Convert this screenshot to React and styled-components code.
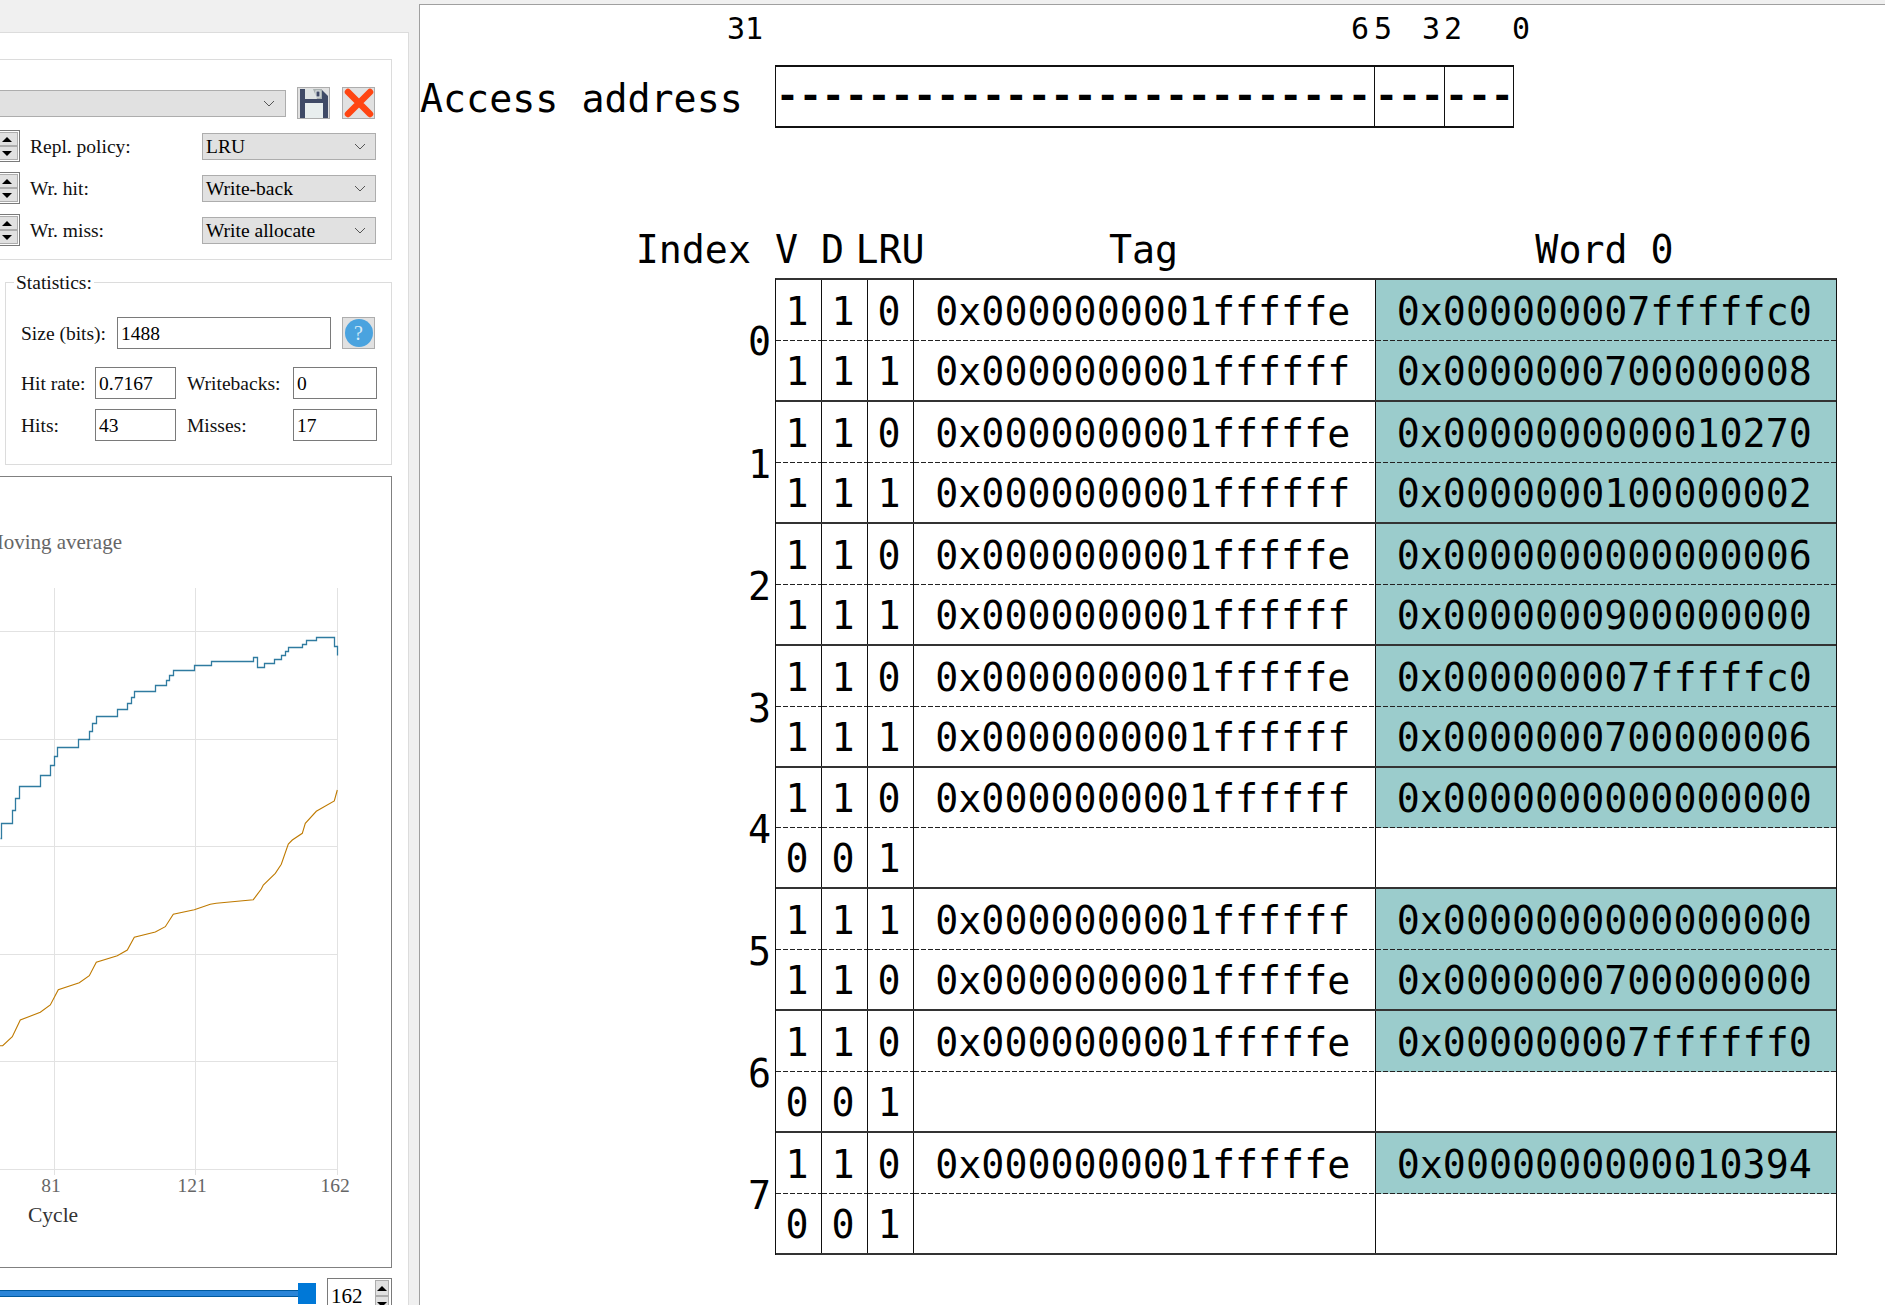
import React from "react";
import styled, { createGlobalStyle } from "styled-components";

const GlobalStyle = createGlobalStyle`
  html, body {
    margin: 0;
    padding: 0;
    background: #f0f0f0;
  }
`;

const SETS = [
  [
    ["1", "1", "0", "0x0000000001fffffe", "0x000000007fffffc0"],
    ["1", "1", "1", "0x0000000001ffffff", "0x0000000700000008"],
  ],
  [
    ["1", "1", "0", "0x0000000001fffffe", "0x0000000000010270"],
    ["1", "1", "1", "0x0000000001ffffff", "0x0000000100000002"],
  ],
  [
    ["1", "1", "0", "0x0000000001fffffe", "0x0000000000000006"],
    ["1", "1", "1", "0x0000000001ffffff", "0x0000000900000000"],
  ],
  [
    ["1", "1", "0", "0x0000000001fffffe", "0x000000007fffffc0"],
    ["1", "1", "1", "0x0000000001ffffff", "0x0000000700000006"],
  ],
  [
    ["1", "1", "0", "0x0000000001ffffff", "0x0000000000000000"],
    ["0", "0", "1", "", ""],
  ],
  [
    ["1", "1", "1", "0x0000000001ffffff", "0x0000000000000000"],
    ["1", "1", "0", "0x0000000001fffffe", "0x0000000700000000"],
  ],
  [
    ["1", "1", "0", "0x0000000001fffffe", "0x000000007ffffff0"],
    ["0", "0", "1", "", ""],
  ],
  [
    ["1", "1", "0", "0x0000000001fffffe", "0x0000000000010394"],
    ["0", "0", "1", "", ""],
  ],
];

const BITS = [
  { text: "31", gap: 307 },
  { text: "6", gap: 588 },
  { text: "5", gap: -7 },
  { text: "3", gap: 18 },
  { text: "2", gap: -8 },
  { text: "0", gap: 38 },
];

// traced from the reference, x then y in chart pixels * 3
const HIT_STEPS = [
  [0, 1105], [4, 1105], [4, 1060], [37, 1060], [37, 1021], [46, 1021], [46, 985], [58, 985],
  [58, 949], [121, 949], [121, 916], [151, 916], [151, 886], [163, 886], [163, 859], [172, 859],
  [172, 832], [235, 832], [235, 808], [268, 808], [268, 784], [277, 784], [277, 760], [289, 760],
  [289, 739], [352, 739], [352, 718], [382, 718], [382, 700], [394, 700], [394, 682], [403, 682],
  [403, 664], [466, 664], [466, 646], [499, 646], [499, 631], [508, 631], [508, 616], [520, 616],
  [520, 601], [583, 601], [583, 586], [634, 586], [634, 574], [760, 574], [760, 562], [772, 562],
  [772, 592], [793, 592], [793, 580], [823, 580], [823, 568], [844, 568], [844, 556], [856, 556],
  [856, 544], [865, 544], [865, 532], [907, 532], [907, 523], [919, 523], [919, 511], [949, 511],
  [949, 502], [1003, 502], [1003, 529], [1012, 529], [1012, 556],
];

const AVG_LOW = [
  [0, 482], [8, 482], [37, 455], [61, 405], [121, 382], [151, 360], [175, 314], [238, 293],
  [268, 272], [289, 232], [352, 212], [382, 195], [403, 157], [466, 141], [496, 125], [520, 88],
  [583, 74], [631, 58], [649, 55], [760, 44], [784, 12], [790, 0],
];

const AVG_HIGH = [
  [826, 1210], [844, 1183], [865, 1122], [877, 1110], [907, 1090], [916, 1060], [949, 1024],
  [1003, 993], [1012, 960],
];

const upperPoint = ([x, y]) => `${(x / 3).toFixed(1)},${(y / 3 - 7).toFixed(1)}`;
const lowerPoint = ([x, y]) => `${(x / 3).toFixed(1)},${(y / 3 + 408).toFixed(1)}`;
const stepPoint = ([x, y]) => `${Math.round(x / 3) + 0.5},${Math.round(y / 3 - 7) + 0.5}`;

const GRID_Y = [154, 262, 369, 477, 584, 692];
const GRID_X = [54, 195, 337];

function Chevron() {
  return (
    <svg width="12" height="7" viewBox="0 0 12 7">
      <polyline points="1,1 6,6 11,1" fill="none" stroke="#555" strokeWidth="1" />
    </svg>
  );
}

function Select({ children }) {
  return (
    <Combo>
      <ComboText>{children}</ComboText>
      <Chevron />
    </Combo>
  );
}

function SaveIcon() {
  return (
    <svg width="28" height="29" viewBox="0 0 28 29">
      <path d="M0 0H21L28 7V29H0Z" fill="#3f4a66" />
      <path d="M5 0H22V10H5Z" fill="#a9b1b1" />
      <path d="M5 0H13L17 10H5Z" fill="#dfe4e4" />
      <rect x="16" y="2" width="4" height="6" fill="#3f4a66" stroke="#e8eeee" strokeWidth="1" />
      <rect x="5" y="14" width="18" height="15" fill="#e8eeee" />
    </svg>
  );
}

function CloseIcon() {
  return (
    <svg width="30" height="30" viewBox="0 0 30 30">
      <path d="M4 4L26 26M26 4L4 26" stroke="#ff4512" strokeWidth="6.5" strokeLinecap="round" />
    </svg>
  );
}

function Spinner() {
  return (
    <SpinBox>
      <SpinColumn>
        <SpinButton>
          <Arrow $up />
        </SpinButton>
        <SpinButton>
          <Arrow />
        </SpinButton>
      </SpinColumn>
    </SpinBox>
  );
}

function Chart() {
  return (
    <ChartSvg viewBox="0 0 390 789">
      {GRID_Y.map((y) => (
        <line key={y} x1="0" x2="338" y1={y + 0.5} y2={y + 0.5} stroke="#e2e2e2" />
      ))}
      {GRID_X.map((x) => (
        <line key={x} x1={x + 0.5} x2={x + 0.5} y1="111" y2="698" stroke="#e2e2e2" />
      ))}
      <polyline points={HIT_STEPS.map(stepPoint).join(" ")} fill="none" stroke="#2f7ba0" strokeWidth="1.3" />
      <polyline
        points={[...AVG_LOW.map(lowerPoint), ...AVG_HIGH.map(upperPoint)].join(" ")}
        fill="none"
        stroke="#bf7a00"
        strokeWidth="1.1"
      />
      <LegendText x="122" y="72" textAnchor="end">
        Moving average
      </LegendText>
      <ChartText x="51" y="715" textAnchor="middle">
        81
      </ChartText>
      <ChartText x="192" y="715" textAnchor="middle">
        121
      </ChartText>
      <ChartText x="335" y="715" textAnchor="middle">
        162
      </ChartText>
      <AxisTitle x="28" y="745">
        Cycle
      </AxisTitle>
    </ChartSvg>
  );
}

export default function App() {
  return (
    <>
      <GlobalStyle />
      <Page>
        <LeftPane>
          <Panel>
            <ConfigGroup>
              <ToolRow>
                <PresetCombo>
                  <Chevron />
                </PresetCombo>
                <IconButton>
                  <SaveIcon />
                </IconButton>
                <IconButton>
                  <CloseIcon />
                </IconButton>
              </ToolRow>
              <ConfigRow>
                <Spinner />
                <ConfigLabel>Repl. policy:</ConfigLabel>
                <Select>LRU</Select>
              </ConfigRow>
              <ConfigRow>
                <Spinner />
                <ConfigLabel>Wr. hit:</ConfigLabel>
                <Select>Write-back</Select>
              </ConfigRow>
              <ConfigRow>
                <Spinner />
                <ConfigLabel>Wr. miss:</ConfigLabel>
                <Select>Write allocate</Select>
              </ConfigRow>
            </ConfigGroup>

            <StatsGroup>
              <StatsTitle>Statistics:</StatsTitle>
              <SizeRow>
                <StatLabel $width={96}>Size (bits):</StatLabel>
                <Field $width={214}>1488</Field>
                <IconButton>
                  <HelpCircle>?</HelpCircle>
                </IconButton>
              </SizeRow>
              <StatRow>
                <StatLabel $width={74}>Hit rate:</StatLabel>
                <Field $width={81}>0.7167</Field>
                <StatLabel $width={106}>Writebacks:</StatLabel>
                <Field $width={84}>0</Field>
              </StatRow>
              <StatRow>
                <StatLabel $width={74}>Hits:</StatLabel>
                <Field $width={81}>43</Field>
                <StatLabel $width={106}>Misses:</StatLabel>
                <Field $width={84}>17</Field>
              </StatRow>
            </StatsGroup>

            <ChartBox>
              <Chart />
            </ChartBox>

            <SliderRow>
              <Slider>
                <Track />
                <Handle />
              </Slider>
              <CycleBox>
                <CycleValue>162</CycleValue>
                <CycleButtons>
                  <SpinButton>
                    <Arrow $up />
                  </SpinButton>
                  <SpinButton>
                    <Arrow />
                  </SpinButton>
                </CycleButtons>
              </CycleBox>
            </SliderRow>
          </Panel>
        </LeftPane>

        <RightPane>
          <BitRow>
            {BITS.map((bit) => (
              <Bit key={bit.text} $gap={bit.gap}>
                {bit.text}
              </Bit>
            ))}
          </BitRow>

          <AddressRow>
            <AddressLabel>Access address</AddressLabel>
            <AddressBox>
              <AddressField $width={599}>{"-".repeat(26)}</AddressField>
              <AddressField $width={70}>---</AddressField>
              <AddressField $width={68} $last>
                ---
              </AddressField>
            </AddressBox>
          </AddressRow>

          <HeaderRow>
            <IndexHeader>Index</IndexHeader>
            <BitHeader $width={46}>V</BitHeader>
            <BitHeader $width={46}>D</BitHeader>
            <LruHeader>LRU</LruHeader>
            <WideHeader>Tag</WideHeader>
            <WideHeader>Word 0</WideHeader>
          </HeaderRow>

          <CacheTable>
            {SETS.map((ways, index) => (
              <SetRow key={index}>
                <SetIndex>{index}</SetIndex>
                <SetBody $first={index === 0}>
                  {ways.map((way, wayIndex) => (
                    <WayRow key={wayIndex} $last={wayIndex === 1}>
                      <Cell $dashed={wayIndex === 0}>{way[0]}</Cell>
                      <Cell $dashed={wayIndex === 0}>{way[1]}</Cell>
                      <Cell $dashed={wayIndex === 0}>{way[2]}</Cell>
                      <Cell $dashed={wayIndex === 0}>{way[3]}</Cell>
                      <Cell $dashed={wayIndex === 0} $filled={way[4] !== ""} $end>
                        {way[4]}
                      </Cell>
                    </WayRow>
                  ))}
                </SetBody>
              </SetRow>
            ))}
          </CacheTable>
        </RightPane>
      </Page>
    </>
  );
}

const Page = styled.div`
  display: flex;
  width: 1885px;
  height: 1305px;
  overflow: hidden;
  background: #f0f0f0;
`;

const LeftPane = styled.div`
  flex: none;
  width: 419px;
  height: 1305px;
  padding-top: 32px;
  box-sizing: border-box;
  display: flex;
  justify-content: flex-end;
  padding-right: 10px;
  overflow: hidden;
  font-family: "Liberation Serif", serif;
  font-size: 19.5px;
  color: #000;
`;

const Panel = styled.div`
  flex: none;
  width: 420px;
  height: 1273px;
  box-sizing: border-box;
  background: #fff;
  border-top: 1px solid #dcdcdc;
  border-right: 1px solid #dcdcdc;
  padding: 26px 16px 0 0;
  display: flex;
  flex-direction: column;
  align-items: flex-end;
`;

const ConfigGroup = styled.div`
  flex: none;
  width: 400px;
  height: 201px;
  box-sizing: border-box;
  border: 1px solid #dcdcdc;
  padding: 27px 15px 0 0;
  display: flex;
  flex-direction: column;
  gap: 10px;
`;

const ToolRow = styled.div`
  display: flex;
  justify-content: flex-end;
  align-items: center;
  height: 32px;
  margin-bottom: 1px;
  gap: 12px;
  padding-right: 1px;
`;

const PresetCombo = styled.div`
  flex: none;
  width: 300px;
  height: 27px;
  box-sizing: border-box;
  margin-right: -1px;
  background: #e1e1e1;
  border: 1px solid #adadad;
  display: flex;
  justify-content: flex-end;
  align-items: center;
  padding-right: 10px;
`;

const IconButton = styled.div`
  flex: none;
  width: 33px;
  height: 32px;
  box-sizing: border-box;
  background: #e1e1e1;
  border: 1px solid #adadad;
  display: flex;
  align-items: center;
  justify-content: center;
`;

const ConfigRow = styled.div`
  display: flex;
  justify-content: flex-end;
  align-items: center;
  height: 32px;
`;

const ConfigLabel = styled.div`
  flex: none;
  width: 172px;
  padding-top: 2px;
  color: #111;
`;

const Combo = styled.div`
  flex: none;
  width: 174px;
  height: 27px;
  box-sizing: border-box;
  background: #e1e1e1;
  border: 1px solid #adadad;
  display: flex;
  justify-content: space-between;
  align-items: center;
  padding: 0 9px 0 3px;
  white-space: nowrap;
`;

const ComboText = styled.span`
  padding-top: 2px;
`;

const SpinBox = styled.div`
  flex: none;
  width: 30px;
  height: 32px;
  box-sizing: border-box;
  margin-right: 10px;
  border: 1px solid #7a7a7a;
  background: #fff;
  display: flex;
  justify-content: flex-end;
  padding: 1px;
`;

const SpinColumn = styled.div`
  width: 22px;
  display: flex;
  flex-direction: column;
`;

const SpinButton = styled.div`
  flex: 1;
  background: #e1e1e1;
  border: 1px solid #adadad;
  display: flex;
  align-items: center;
  justify-content: center;
`;

const Arrow = styled.div`
  width: 0;
  height: 0;
  border-left: 5px solid transparent;
  border-right: 5px solid transparent;
  border-bottom: ${(p) => (p.$up ? "5px solid #000" : "0")};
  border-top: ${(p) => (p.$up ? "0" : "5px solid #000")};
`;

const StatsGroup = styled.fieldset`
  flex: none;
  width: 387px;
  height: 195px;
  box-sizing: border-box;
  margin: 10px 0 0;
  padding: 23px 16px 0 15px;
  border: 1px solid #dcdcdc;
  min-inline-size: 0;
  display: flex;
  flex-direction: column;
`;

const StatsTitle = styled.legend`
  padding: 2px 2px 0;
  margin-left: -7px;
  line-height: 22px;
  color: #111;
`;

const SizeRow = styled.div`
  display: flex;
  align-items: center;
  height: 32px;
  margin-bottom: 18px;
`;

const StatRow = styled.div`
  display: flex;
  align-items: center;
  height: 32px;
  margin-bottom: 10px;
`;

const StatLabel = styled.div`
  flex: none;
  width: ${(p) => p.$width}px;
  padding-top: 2px;
  white-space: nowrap;
  color: #111;
`;

const Field = styled.div`
  flex: none;
  width: ${(p) => p.$width}px;
  height: 32px;
  box-sizing: border-box;
  margin-right: 11px;
  border: 1px solid #7a7a7a;
  background: #fff;
  padding-left: 3px;
  line-height: 31px;

  &:last-child {
    margin-right: 0;
  }
`;

const HelpCircle = styled.div`
  width: 28px;
  height: 28px;
  border-radius: 50%;
  background: #4aa3df;
  color: #d8ecf8;
  font-size: 20px;
  line-height: 28px;
  text-align: center;
`;

const ChartBox = styled.div`
  flex: none;
  width: 400px;
  height: 792px;
  box-sizing: border-box;
  margin-top: 11px;
  border: 1px solid #808080;
  background: #fff;
  display: flex;
  justify-content: flex-end;
`;

const ChartSvg = styled.svg`
  flex: none;
  width: 390px;
  height: 789px;
  margin-right: 1px;
`;

const ChartText = styled.text`
  font-family: "Liberation Serif", serif;
  font-size: 19.5px;
  fill: #666;
`;

const LegendText = styled(ChartText)`
  font-size: 21px;
`;

const AxisTitle = styled.text`
  font-family: "Liberation Serif", serif;
  font-size: 21.5px;
  fill: #333;
`;

const SliderRow = styled.div`
  flex: none;
  display: flex;
  align-items: flex-start;
  justify-content: flex-end;
  gap: 11px;
  margin-top: 10px;
`;

const Slider = styled.div`
  width: 318px;
  height: 21px;
  margin-top: 5px;
  display: flex;
  align-items: center;
`;

const Track = styled.div`
  flex: 1;
  height: 5px;
  background: #2a85d8;
  border-top: 1px solid #005a9e;
  border-bottom: 1px solid #005a9e;
`;

const Handle = styled.div`
  flex: none;
  width: 18px;
  height: 21px;
  background: #0078d7;
`;

const CycleBox = styled.div`
  width: 65px;
  height: 40px;
  box-sizing: border-box;
  border: 1px solid #7a7a7a;
  background: #fff;
  display: flex;
  justify-content: space-between;
  padding: 1px;
`;

const CycleValue = styled.div`
  padding: 4px 0 0 2px;
  font-size: 21px;
`;

const CycleButtons = styled.div`
  width: 14px;
  height: 32px;
  display: flex;
  flex-direction: column;
  margin-right: 1px;
`;

const RightPane = styled.div`
  flex: 1;
  height: 1301px;
  margin-top: 4px;
  box-sizing: border-box;
  background: #fff;
  border-top: 1px solid #a0a0a0;
  border-left: 1px solid #a0a0a0;
  font-family: "DejaVu Sans Mono", monospace;
  font-size: 38.3px;
  color: #000;
  overflow: hidden;
`;

const BitRow = styled.div`
  display: flex;
  height: 60px;
  padding-bottom: 14px;
  box-sizing: border-box;
  align-items: center;
  font-size: 30px;
`;

const Bit = styled.div`
  flex: none;
  width: 30px;
  margin-left: ${(p) => p.$gap}px;
  text-align: center;
`;

const AddressRow = styled.div`
  display: flex;
  align-items: center;
  height: 63px;
`;

const AddressLabel = styled.div`
  flex: none;
  width: 355px;
  padding-top: 4px;
  white-space: nowrap;
`;

const AddressBox = styled.div`
  display: flex;
  height: 63px;
  box-sizing: border-box;
  border: 1px solid #111;
  border-top-width: 2px;
  border-bottom-width: 2px;
`;

const AddressField = styled.div`
  flex: none;
  width: ${(p) => p.$width}px;
  box-sizing: border-box;
  border-right: ${(p) => (p.$last ? "0" : "1px solid #111")};
  font-size: 38px;
  font-weight: bold;
  line-height: 56px;
  white-space: nowrap;
`;

const HeaderRow = styled.div`
  display: flex;
  align-items: flex-end;
  height: 150px;
  white-space: nowrap;
  line-height: 56px;
`;

const IndexHeader = styled.div`
  flex: none;
  width: 331px;
  text-align: right;
  margin-right: 24px;
`;

const BitHeader = styled.div`
  flex: none;
  width: ${(p) => p.$width}px;
`;

const LruHeader = styled.div`
  flex: none;
  width: 46px;
  display: flex;
  justify-content: center;
`;

const WideHeader = styled.div`
  flex: none;
  width: 461px;
  text-align: center;
`;

const CacheTable = styled.div`
  display: flex;
  flex-direction: column;
`;

const SetRow = styled.div`
  display: flex;
  align-items: center;
`;

const SetIndex = styled.div`
  flex: none;
  width: 351px;
  margin-right: 4px;
  padding-top: 3px;
  text-align: right;
`;

const SetBody = styled.div`
  flex: none;
  width: 1062px;
  box-sizing: border-box;
  border-left: 1px solid #111;
  border-right: 1px solid #111;
  border-top: ${(p) => (p.$first ? "2px solid #333" : "0")};
`;

const WayRow = styled.div`
  display: grid;
  grid-template-columns: 46px 46px 46px 461.5px 1fr;
  height: 60.95px;
  box-sizing: border-box;
  border-bottom: ${(p) => (p.$last ? "2px solid #333" : "0")};
`;

const Cell = styled.div`
  display: flex;
  align-items: center;
  justify-content: center;
  box-sizing: border-box;
  padding: 2px 3px 0 0;
  border-right: ${(p) => (p.$end ? "0" : "1px solid #111")};
  background-color: ${(p) => (p.$filled ? "#9bcccc" : "transparent")};
  background-image: ${(p) => (p.$dashed ? "linear-gradient(to right, #222 5px, transparent 5px)" : "none")};
  background-size: 7px 1px;
  background-repeat: repeat-x;
  background-position: left bottom;
`;
